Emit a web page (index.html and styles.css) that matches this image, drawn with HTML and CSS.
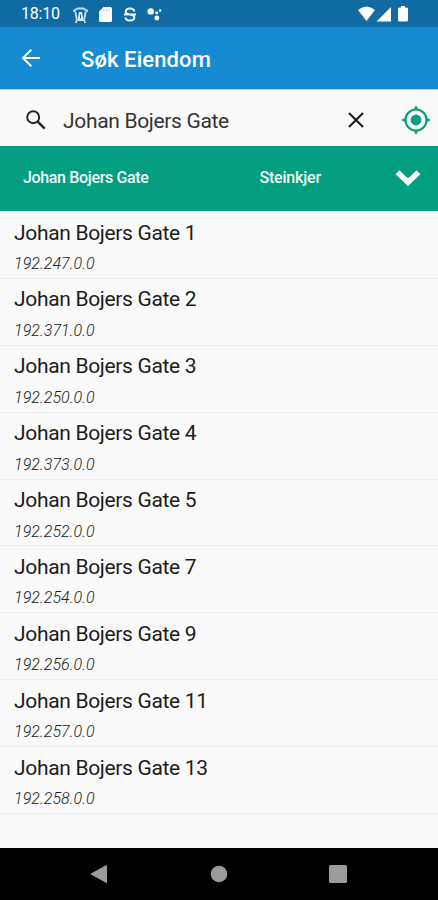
FILE: index.html
```html
<!DOCTYPE html>
<html lang="no">
<head>
    <meta charset="UTF-8">
    <meta name="viewport" content="width=device-width, initial-scale=1.0">
    <title>Søk Eiendom</title>
    <link rel="stylesheet" href="styles.css">
</head>
<body>
    <div class="status-bar">
        <span class="clock">18:10</span>
        <svg class="status-trash" width="15" height="17" viewBox="0 0 15 17" fill="none" stroke="#c9deeb">
            <path d="M1 5V3.500L5 1.500h5l4 2V5M2.300 4.500L4 13.500M12.700 4.500L11 13.500M3.800 13l-1 3M11.200 13l1 3" stroke-width="1.800"/>
            <path d="M6 5h3l1.500 9h-6z" fill="#e4eff7" stroke="none"/>
            <path d="M7.500 7.500v4" stroke="#106ba3"/>
        </svg>
        <svg class="status-card" width="13" height="15" viewBox="0 0 13 15">
            <path d="M4.500 0H11.500Q13 0 13 1.500V13.500Q13 15 11.500 15H1.500Q0 15 0 13.500V4.500z" fill="#fff"/>
            <path d="M5 2v2.500M7.500 2v2.500M10 2v2.500" stroke="#b5d1e3"/>
        </svg>
        <svg class="status-s" width="12" height="15" viewBox="0 0 12 15" fill="none" stroke="#f0f6fa" stroke-width="2">
            <path d="M10.300 4.500Q10 1.500 6 1.500T1.700 4.400Q1.700 7 6 7.400T10.300 10.600Q10.300 13.500 6 13.500T1.500 10.500M0 7.400h12"/>
        </svg>
        <svg class="status-dots" width="16" height="14" viewBox="0 0 16 14" fill="#fff">
            <circle cx="3.700" cy="4.400" r="3.200"/>
            <circle cx="9.800" cy="5.800" r="1.500"/>
            <circle cx="9.800" cy="11" r="2.400"/>
            <circle cx="13.200" cy="3.500" r="1.200"/>
        </svg>
        <svg class="status-system" width="52" height="16" viewBox="0 0 52 16" fill="#fff">
            <path d="M0 4Q8.500-3 17 4L8.500 15z"/>
            <path d="M18.500 15.500H33V1z"/>
            <path d="M43 0h4v1.500h1.500q1.500 0 1.500 1.500v11q0 1.500-1.500 1.500h-7Q40 15.500 40 14V3q0-1.500 1.500-1.500H43z"/>
        </svg>
    </div>

    <header class="app-bar">
        <svg class="back" width="20" height="20" viewBox="0 0 20 20" fill="none" stroke="#fff" stroke-width="2">
            <path d="M19 10H2.500M10.300 1.700L2 10l8.300 8.300"/>
        </svg>
        <h1>Søk Eiendom</h1>
    </header>

    <div class="search-bar">
        <svg class="search-icon" width="20" height="20" viewBox="0 0 20 20" fill="none" stroke="#222">
            <circle cx="7.200" cy="7.200" r="6" stroke-width="1.900"/>
            <path d="M11.700 11.700l7 7" stroke-width="2.400"/>
        </svg>
        <span class="query">Johan Bojers Gate</span>
        <svg class="clear" width="16" height="16" viewBox="0 0 16 16" stroke="#161616" stroke-width="1.900">
            <path d="M1 1l14 14M15 1L1 15"/>
        </svg>
        <svg class="locate" width="30" height="30" viewBox="0 0 30 30" fill="#0a9f80">
            <circle cx="15" cy="15" r="10.500" fill="none" stroke="#0a9f80" stroke-width="2.200"/>
            <circle cx="15" cy="15" r="5.400"/>
            <path d="M15 0l2.500 5h-5zM15 30l2.500-5h-5zM0 15l5-2.500v5zM30 15l-5-2.500v5z"/>
        </svg>
    </div>

    <div class="group-header">
        <span class="street">Johan Bojers Gate</span>
        <span class="city">Steinkjer</span>
        <svg class="chevron" width="26" height="18" viewBox="0 0 26 18" fill="none" stroke="#fff" stroke-width="5.500">
            <path d="M2.500 3.300L13 13.200 23.500 3.300"/>
        </svg>
    </div>

    <ul class="results">
        <li><span class="address">Johan Bojers Gate 1</span><span class="number">192.247.0.0</span></li>
        <li><span class="address">Johan Bojers Gate 2</span><span class="number">192.371.0.0</span></li>
        <li><span class="address">Johan Bojers Gate 3</span><span class="number">192.250.0.0</span></li>
        <li><span class="address">Johan Bojers Gate 4</span><span class="number">192.373.0.0</span></li>
        <li><span class="address">Johan Bojers Gate 5</span><span class="number">192.252.0.0</span></li>
        <li><span class="address">Johan Bojers Gate 7</span><span class="number">192.254.0.0</span></li>
        <li><span class="address">Johan Bojers Gate 9</span><span class="number">192.256.0.0</span></li>
        <li><span class="address">Johan Bojers Gate 11</span><span class="number">192.257.0.0</span></li>
        <li><span class="address">Johan Bojers Gate 13</span><span class="number">192.258.0.0</span></li>
    </ul>

    <nav class="nav-bar">
        <svg width="18" height="18" viewBox="0 0 18 18" fill="#9b9b9b"><path d="M1 9L16.500 .5v17z" stroke="#9b9b9b" stroke-linejoin="round"/></svg>
        <svg width="18" height="18" viewBox="0 0 18 18" fill="#9b9b9b"><circle cx="9" cy="9" r="8.300"/></svg>
        <svg width="18" height="18" viewBox="0 0 18 18" fill="#9b9b9b"><rect width="18" height="18" rx="1.500"/></svg>
    </nav>
</body>
</html>
```
FILE: styles.css
```css
* {
    box-sizing: border-box;
}

body {
    margin: 0;
    height: 900px;
    display: flex;
    flex-direction: column;
    overflow: hidden;
    background-color: #fafafa;
    font-family: Roboto, sans-serif;
    color: #1c1c1c;
}

svg {
    display: block;
    flex: none;
}

.status-bar {
    height: 27px;
    flex: none;
    display: flex;
    align-items: center;
    padding: 1px 28px 0 21px;
    background-color: #106ba3;
}

.clock {
    width: 52px;
    color: #fff;
    font-size: 16px;
    line-height: 20px;
    letter-spacing: -0.2px;
}

.status-trash {
    margin-top: 2px;
}

.status-card {
    margin-left: 11px;
}

.status-s {
    margin-left: 12px;
}

.status-dots {
    margin-left: 11px;
}

.status-system {
    margin-left: auto;
}

.app-bar {
    height: 63px;
    flex: none;
    display: flex;
    align-items: center;
    padding: 0 21px 1px;
    background-color: #168bd2;
    border-bottom: 1px solid #a9cfec;
}

h1 {
    margin: 4px 0 0 40px;
    color: #fff;
    font-size: 22px;
    font-weight: 500;
    letter-spacing: 0.1px;
}

.search-bar {
    height: 56px;
    flex: none;
    display: flex;
    align-items: center;
    padding: 4px 7px 0 26px;
}

.query {
    flex: 1;
    margin: 1px 0 0 17px;
    font-size: 21px;
    letter-spacing: -0.33px;
    color: #333;
}

.locate {
    margin-left: 37px;
}

.group-header {
    height: 65px;
    flex: none;
    display: flex;
    align-items: center;
    padding: 0 17px 3px 23px;
    background-color: #049f80;
    color: #f2faf8;
    font-size: 16px;
    font-weight: 500;
    letter-spacing: -0.35px;
}

.street {
    width: 236.5px;
}

.city {
    letter-spacing: -0.2px;
}

.chevron {
    margin-left: auto;
    margin-top: 2px;
}

.results {
    flex: 1;
    margin: 0;
    padding: 1px 0 0;
    list-style: none;
}

.results li {
    height: 66.9px;
    padding: 7.500px 14px 0;
    border-bottom: 1px solid #efefef;
}

.address,
.number {
    display: block;
}

.address {
    font-size: 21px;
    line-height: 26px;
    letter-spacing: -0.33px;
}

.number {
    margin-top: 8.500px;
    font-size: 16px;
    font-weight: 300;
    font-style: italic;
    line-height: 20px;
    letter-spacing: 0.05px;
    color: #222;
}

.nav-bar {
    height: 52px;
    flex: none;
    display: flex;
    align-items: center;
    justify-content: space-between;
    padding: 0 91px 0 90px;
    background-color: #000;
}
```
